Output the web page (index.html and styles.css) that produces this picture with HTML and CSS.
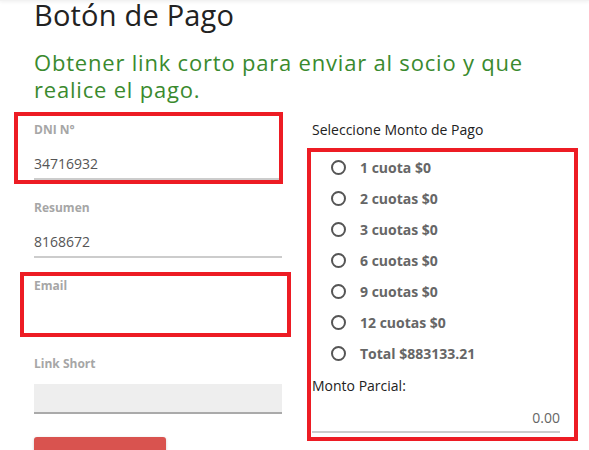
FILE: index.html
```html
<!DOCTYPE html>
<html lang="es">
<head>
<meta charset="utf-8">
<title>Botón de Pago</title>
<link rel="stylesheet" href="styles.css">
</head>
<body>
<div class="topbar"></div>
<main class="page">
  <h1 class="title">Botón de Pago</h1>
  <p class="lead">Obtener link corto para enviar al socio y que realice el pago.</p>
  <div class="cols">
    <div class="col col-form">
      <div class="field">
        <label class="label">DNI N°</label>
        <div class="input">34716932</div>
      </div>
      <div class="field">
        <label class="label">Resumen</label>
        <div class="input">8168672</div>
      </div>
      <div class="field">
        <label class="label">Email</label>
        <div class="input"></div>
      </div>
      <div class="field">
        <label class="label">Link Short</label>
        <div class="input input-disabled"></div>
      </div>
      <button class="btn" type="button"></button>
    </div>
    <div class="col">
      <div class="section-label">Seleccione Monto de Pago</div>
      <ul class="radios">
        <li class="radio"><span class="circle"></span>1 cuota $0</li>
        <li class="radio"><span class="circle"></span>2 cuotas $0</li>
        <li class="radio"><span class="circle"></span>3 cuotas $0</li>
        <li class="radio"><span class="circle"></span>6 cuotas $0</li>
        <li class="radio"><span class="circle"></span>9 cuotas $0</li>
        <li class="radio"><span class="circle"></span>12 cuotas $0</li>
        <li class="radio"><span class="circle"></span>Total $883133.21</li>
      </ul>
      <div class="section-label">Monto Parcial:</div>
      <div class="amount">0.00</div>
    </div>
  </div>
  <div class="mark mark-dni"></div>
  <div class="mark mark-email"></div>
  <div class="mark mark-montos"></div>
</main>
</body>
</html>
```
FILE: styles.css
```css
html, body {
  margin: 0;
  padding: 0;
  background: #fff;
}
body {
  font-family: "Open Sans", "Lato", sans-serif;
  color: #333;
  overflow: hidden;
}
.topbar {
  height: 1px;
  background: #f2f2f2;
  box-shadow: 0 1px 3px rgba(0, 0, 0, 0.12);
}
.page {
  position: relative;
  padding: 0 29px 0 34px;
}
.title {
  margin: 0;
  font-size: 29px;
  line-height: 28px;
  font-weight: 400;
  letter-spacing: 0.2px;
  color: #222;
}
.lead {
  margin: 20px 0 0;
  font-size: 22px;
  line-height: 27px;
  letter-spacing: 0.8px;
  color: #3a8a2e;
  max-width: 530px;
}
.cols {
  display: grid;
  grid-template-columns: 248px 248px;
  column-gap: 30px;
  margin-top: 17px;
}
.col-form {
  padding-top: 2px;
}
.field {
  margin-bottom: 20px;
}
.label {
  display: block;
  font-size: 12px;
  line-height: 16px;
  font-weight: 700;
  color: #a6a6a6;
  margin-bottom: 12px;
}
.input {
  height: 28px;
  line-height: 28px;
  font-size: 14px;
  color: #555;
  border-bottom: 2px solid #ccc;
}
.input-disabled {
  background: #eee;
  border-bottom-color: #aaa;
}
.btn {
  display: block;
  margin-top: 23px;
  width: 132px;
  height: 30px;
  border: 0;
  border-radius: 3px 3px 0 0;
  background: #d9534f;
  box-shadow: 0 1px 3px rgba(0, 0, 0, 0.2);
}
.section-label {
  font-size: 14px;
  line-height: 20px;
  color: #222;
}
.radios {
  list-style: none;
  margin: 12px 0 7px;
  padding: 0 0 0 19px;
}
.radio {
  display: flex;
  align-items: center;
  height: 31px;
  font-size: 14px;
  font-weight: 700;
  color: #666;
}
.circle {
  box-sizing: border-box;
  width: 15px;
  height: 15px;
  border: 2px solid #555;
  border-radius: 50%;
  margin-right: 14px;
}
.amount {
  margin-top: 12px;
  height: 20px;
  line-height: 20px;
  padding-bottom: 3px;
  text-align: right;
  font-size: 14px;
  color: #666;
  border-bottom: 2px solid #ccc;
}
.mark {
  position: absolute;
  box-sizing: border-box;
  border: 4px solid #ed1c24;
}
.mark-dni {
  left: 14px;
  top: 111px;
  width: 269px;
  height: 72px;
}
.mark-email {
  left: 20px;
  top: 271px;
  width: 271px;
  height: 65px;
}
.mark-montos {
  left: 307px;
  top: 147px;
  width: 271px;
  height: 293px;
}
```
